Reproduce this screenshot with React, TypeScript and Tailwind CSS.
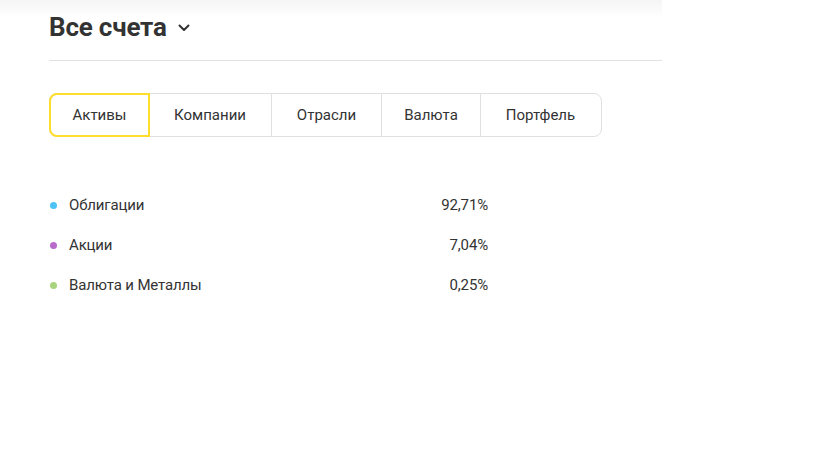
import React from "react";

const tabs = [
  { label: "Активы", w: "w-[101px]" },
  { label: "Компании", w: "w-[122px]" },
  { label: "Отрасли", w: "w-[110px]" },
  { label: "Валюта", w: "w-[99px]" },
  { label: "Портфель", w: "w-[120px]" },
];

const rows = [
  { name: "Облигации", value: "92,71%", dot: "bg-[#4cc2f5]" },
  { name: "Акции", value: "7,04%", dot: "bg-[#b96bcb]" },
  { name: "Валюта и Металлы", value: "0,25%", dot: "bg-[#a7d47c]" },
];

export default function App() {
  return (
    <div className="w-[819px] h-[460px] bg-white text-[#333333] font-['Roboto',sans-serif] relative overflow-hidden">
      <div className="w-[662px] h-[18px] bg-gradient-to-b from-[#f5f5f5] to-white absolute top-0 left-0" />
      <div className="relative pl-[49px] w-[662px]">
        <div className="flex items-center h-[61px] pt-[1px] border-b border-[#e1e1e1]">
          <h1 className="text-[26px] font-bold tracking-[-0.2px] leading-none mb-[7px] pb-[1px]">Все счета</h1>
          <svg className="ml-[11px] mb-[5px]" width="12" height="8" viewBox="0 0 12 8" fill="none">
            <path d="M1.5 1.5L6 6L10.5 1.5" stroke="#333" strokeWidth="2" strokeLinecap="round" strokeLinejoin="round" />
          </svg>
        </div>
        <div className="mt-[32px] flex h-[44px] w-[553px] border border-[#e0e0e0] rounded-[8px] text-[15px]">
          {tabs.map((t, i) => (
            <div
              key={t.label}
              className={
                i === 0
                  ? `${t.w} -m-[1px] h-[44px] flex items-center justify-center border-2 border-[#ffdd2d] rounded-l-[8px] text-[#333]`
                  : `${t.w} flex items-center justify-center border-l border-[#e0e0e0] text-[#333] ${i === 1 ? "border-l-0" : ""}`
              }
            >
              {t.label}
            </div>
          ))}
        </div>
        <div className="mt-[58px] w-[439px] flex flex-col gap-[19px] text-[15px] tracking-[-0.15px]">
          {rows.map((r) => (
            <div key={r.name} className="flex items-center h-[21px]">
              <span className={`w-[7px] h-[7px] rounded-full ${r.dot} ml-[1px] mr-[12px]`} />
              <span className="flex-1">{r.name}</span>
              <span>{r.value}</span>
            </div>
          ))}
        </div>
      </div>
    </div>
  );
}
